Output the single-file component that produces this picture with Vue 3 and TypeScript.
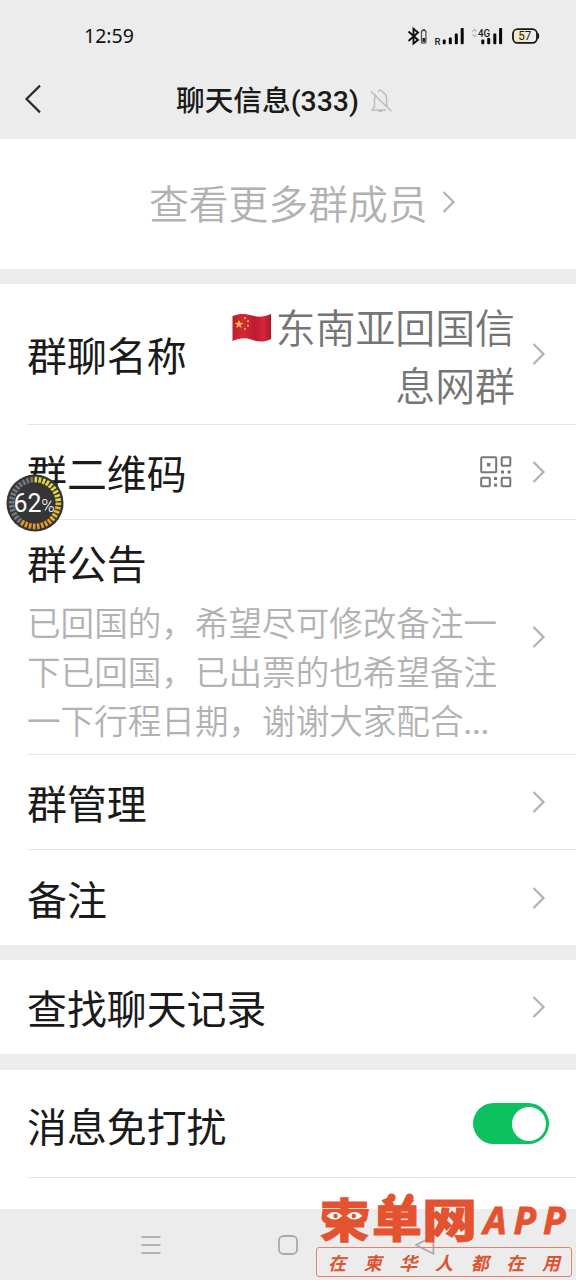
<script setup lang="ts">
interface Tick {
  angle: number
  color: string
}

const ticks: Tick[] = Array.from({ length: 36 }, (_, i) => ({
  angle: i * 10 + 2,
  color: i < 9 ? '#e6d83c' : i < 14 ? '#e3b92f' : i < 22 ? '#e59a24' : '#77777a',
}))

const management: string[] = ['群管理', '备注']
const slogan: string[] = ['在', '柬', '华', '人', '都', '在', '用']
</script>

<template>
  <div class="screen">
    <header class="top">
      <div class="status">
        <span class="clock">12:59</span>
        <svg class="status-icons" width="136" height="24" viewBox="0 0 136 24">
          <path d="M3.5 7.5 L13 16 L8.5 19.600 V4.700 L13 8.500 L3.500 17" fill="none" stroke="#111" stroke-width="1.9" />
          <rect x="16.5" y="6.5" width="4.400" height="12.600" rx="1" fill="none" stroke="#555" stroke-width="1.3" />
          <rect x="17.500" y="14" width="2.600" height="4" fill="#222" />
          <path d="M17.500 5.600h2.500" stroke="#444" stroke-width="1" />
          <text x="29.500" y="20.800" font-size="9.5" class="lab semi">R</text>
          <g fill="#080808">
            <rect x="37.7" y="15.5" width="3" height="4.7" rx="1" />
            <rect x="43.8" y="13.6" width="3" height="6.6" rx="1" />
            <rect x="49.8" y="9.4" width="3" height="10.8" rx="1" />
            <rect x="55.7" y="4" width="3" height="16.2" rx="1" />
            <rect x="76.3" y="15.5" width="3" height="4.7" rx="1" />
            <rect x="82.2" y="14" width="3" height="6.2" rx="1" />
            <rect x="88.3" y="9.4" width="3" height="10.8" rx="1" />
            <rect x="94.1" y="4" width="3" height="16.2" rx="1" />
          </g>
          <path d="M67.500 7.500l2-2.200 2 2.200M67.500 10.500l2 2.200 2-2.200" fill="none" stroke="#b5b5b5" stroke-width="1.2" />
          <text x="73" y="12.700" font-size="10.6" class="lab semi" textLength="12.3" lengthAdjust="spacingAndGlyphs">4G</text>
          <rect x="108" y="5.2" width="24" height="13.7" rx="4.6" fill="#ececec" stroke="#151515" stroke-width="1.8" />
          <path d="M112 6.300h9v11.500h-9q-3-.2-3-3.200v-5q0-3 3-3.300z" fill="#f3e8c5" />
          <path d="M133 9.400q1.700 2.600 0 5.200z" fill="#151515" stroke="#151515" />
          <text x="113.3" y="16.300" font-size="12" class="lab" textLength="13" lengthAdjust="spacingAndGlyphs">57</text>
        </svg>
      </div>
      <div class="titlebar">
        <svg class="back" width="20" height="32" viewBox="0 0 20 32">
          <path d="M17 2.600 L3.500 16 L17 29.400" fill="none" stroke="#2b2b2b" stroke-width="2.2" />
        </svg>
        <h1 class="title">聊天信息<span class="count">(333)</span></h1>
        <svg class="bell" width="24" height="26" viewBox="0 0 24 26">
          <path d="M2.300 22h14.500M3.500 22l2-3.800v-7.500q.1-3 1.500-4.200M9 4.200q.4-2 2.300-2t2.300 2q3.900 1.800 4 6.500v6.500l1 1.500M9.300 22.500q2 2.200 4 0M2 3.500l20.400 19.700" fill="none" stroke="#bdbdbd" stroke-width="1.5" />
        </svg>
      </div>
    </header>

    <section class="more">
      <span>查看更多群成员</span>
      <svg class="arrow" width="16" height="26" viewBox="0 0 16 26"><path d="M2.500 3 L12.500 13 L2.500 23" /></svg>
    </section>

    <section class="group">
      <div class="row name-row">
        <span class="label">群聊名称</span>
        <span class="group-name">
          <svg class="flag" width="40" height="34" viewBox="0 0 40 34">
            <defs>
              <linearGradient id="flagShade">
                <stop offset="0" stop-color="#bd1c2d" />
                <stop offset=".28" stop-color="#d32839" />
                <stop offset=".58" stop-color="#bd1b31" />
                <stop offset=".82" stop-color="#d5263c" />
                <stop offset="1" stop-color="#a91427" />
              </linearGradient>
            </defs>
            <path d="M.5 4 C8 1 14 1.500 20 3.500 S32 5 39 2 V27 C31 31 25 29.500 19 27.500 S8 26 .5 29Z" fill="url(#flagShade)" />
            <path d="M7 7.800l1.100 3 3.200.1-2.500 2 1 3.100L7 14.200 4.200 16l1-3.100-2.500-2 3.200-.1z" fill="#f7c53b" />
            <g fill="#ecae38"><circle cx="13" cy="6.2" r="1.1" /><circle cx="16" cy="9.2" r="1.1" /><circle cx="16" cy="13.7" r="1.1" /><circle cx="13" cy="17" r="1.1" /></g>
          </svg><span>东南亚回国信</span><br /><span>息网群</span>
        </span>
        <svg class="arrow" width="16" height="26" viewBox="0 0 16 26"><path d="M2.500 3 L12.500 13 L2.500 23" /></svg>
      </div>
      <div class="row qr-row">
        <span class="label">群二维码</span>
        <svg class="qr" width="32" height="32" viewBox="0 0 32 32">
          <g fill="none" stroke="#777" stroke-width="2">
            <rect x="1.2" y="1.2" width="15" height="15" rx="1" />
            <rect x="21.7" y="1.2" width="8.6" height="8.6" rx="1" />
            <rect x="1.2" y="21.7" width="8.6" height="8.6" rx="1" />
            <rect x="21.7" y="21.7" width="8.6" height="8.6" rx="1" />
          </g>
          <g fill="#777">
            <rect x="7" y="7" width="3.4" height="3.4" /><rect x="21" y="14.5" width="3" height="3" />
            <rect x="27.6" y="14.5" width="3" height="3" /><rect x="14" y="21" width="3" height="3" />
            <rect x="14" y="27.6" width="3" height="3" />
          </g>
        </svg>
        <svg class="arrow" width="16" height="26" viewBox="0 0 16 26"><path d="M2.500 3 L12.500 13 L2.500 23" /></svg>
      </div>
      <div class="row notice-row">
        <div class="notice">
          <span class="label">群公告</span>
          <p class="notice-text">已回国的，希望尽可修改备注一<br />下已回国，已出票的也希望备注<br />一下行程日期，谢谢大家配合<span class="dots">...</span></p>
        </div>
        <svg class="arrow" width="16" height="26" viewBox="0 0 16 26"><path d="M2.500 3 L12.500 13 L2.500 23" /></svg>
      </div>
      <div v-for="item in management" :key="item" class="row plain-row">
        <span class="label">{{ item }}</span>
        <svg class="arrow" width="16" height="26" viewBox="0 0 16 26"><path d="M2.500 3 L12.500 13 L2.500 23" /></svg>
      </div>
    </section>

    <section class="group">
      <div class="row search-row">
        <span class="label">查找聊天记录</span>
        <svg class="arrow" width="16" height="26" viewBox="0 0 16 26"><path d="M2.500 3 L12.500 13 L2.500 23" /></svg>
      </div>
    </section>

    <section class="group mute">
      <div class="row mute-row">
        <span class="label">消息免打扰</span>
        <span class="switch"><span class="knob"></span></span>
      </div>
    </section>

    <nav class="nav">
      <svg width="20" height="20" viewBox="0 0 20 20"><path d="M.5 2h19M.5 10h19M.5 18h19" stroke="#b3b3b3" stroke-width="1.8" /></svg>
      <svg width="20" height="20" viewBox="0 0 20 20"><rect x="1" y="1" width="18" height="18" rx="4.5" fill="none" stroke="#aaa" stroke-width="1.8" /></svg>
      <svg width="20" height="20" viewBox="0 0 20 20"><path d="M18.400 1.200v17.600L1 10z" fill="none" stroke="#aaa" stroke-width="1.8" stroke-linejoin="round" /></svg>
    </nav>

    <svg class="meter" width="58" height="58" viewBox="0 0 58 58">
      <circle cx="29" cy="29" r="28.5" fill="#353538" />
      <rect v-for="t in ticks" :key="t.angle" x="27.7" y="2.8" width="2.6" height="5.6" :fill="t.color" :transform="`rotate(${t.angle} 29 29)`" />
      <text x="7.600" y="37.800" font-size="26" textLength="28" lengthAdjust="spacingAndGlyphs">62</text>
      <text class="percent" x="35.3" y="38" font-size="18" textLength="13.5" lengthAdjust="spacingAndGlyphs">%</text>
    </svg>

    <div class="brand">
      <svg class="wordmark" width="260" height="52" viewBox="0 0 260 52">
        <g class="heavy">
          <text x="4" y="45.5" textLength="49" lengthAdjust="spacingAndGlyphs">柬</text>
          <text x="56" y="45.5" textLength="50" lengthAdjust="spacingAndGlyphs">单</text>
          <text x="106" y="45.5" textLength="55" lengthAdjust="spacingAndGlyphs">网</text>
        </g>
        <path d="M6.500 18 H53 L51 29 Q49 32 44 32 H11 Q6 32 5.500 27Z" fill="#e45230" />
        <path d="M10.500 25q8-8 16 0-8 7-16 0zM30.500 25q8-8 16 0-8 7-16 0z" fill="#fff" />
        <circle cx="19.5" cy="25" r="2.3" fill="#e45230" />
        <circle cx="37.8" cy="25" r="2.3" fill="#e45230" />
        <circle cx="75.5" cy="6.8" r="4.2" fill="#e45230" />
        <circle cx="93.5" cy="6.8" r="4.2" fill="#e45230" />
        <text class="app" x="167.5" y="43" textLength="82">APP</text>
      </svg>
      <div class="slogan"><span v-for="(c, i) in slogan" :key="i">{{ c }}</span></div>
    </div>
  </div>
</template>

<style>
body {
  background: #ececec;
}
</style>

<style scoped>
.screen {
  position: relative;
  width: 576px;
  height: 1280px;
  overflow: hidden;
  background: #ececec;
  color: #1a1a1a;
  font-family: "Noto Sans CJK SC", sans-serif;
  display: flex;
  flex-direction: column;
}
.top {
  height: 139px;
  flex: none;
}
.status {
  height: 71px;
  box-sizing: border-box;
  display: flex;
  align-items: center;
  justify-content: space-between;
  padding: 0 35px 0 84px;
}
.clock {
  font: 400 19.5px/24px "Noto Sans", sans-serif;
  color: #111;
}
.lab {
  font-family: Roboto, sans-serif;
  fill: #1a1a1a;
}
.semi {
  font-weight: 500;
}
.titlebar {
  height: 56px;
  display: flex;
  align-items: center;
  padding-left: 23px;
}
.title {
  margin: 2px 0 0 133px;
  font-size: 28.7px;
  font-weight: 500;
  line-height: 56px;
  white-space: nowrap;
}
.count {
  font-family: Roboto, sans-serif;
  font-size: 28.4px;
}
.bell {
  margin: 3px 0 0 10px;
}
.more {
  height: 130px;
  flex: none;
  background: #fff;
  display: flex;
  align-items: center;
  padding-left: 149px;
  font-size: 39.8px;
  font-weight: 350;
  color: #b2b2b2;
  box-sizing: border-box;
  padding-bottom: 5px;
}
.more .arrow {
  margin-left: 13px;
}
.arrow {
  flex: none;
}
.arrow path {
  fill: none;
  stroke: #b2b2b2;
  stroke-width: 2.2;
}
.group {
  margin-top: 15px;
  background: #fff;
  flex: none;
}
.row {
  display: flex;
  align-items: center;
  justify-content: space-between;
  box-sizing: border-box;
  margin-left: 27px;
  padding-right: 29px;
  border-bottom: 1px solid #e6e6e6;
}
.row:last-child {
  border-bottom: 0;
}
.label {
  font-size: 39.9px;
  line-height: 56px;
  font-weight: 400;
  white-space: nowrap;
}
.name-row {
  height: 141px;
}
.group-name {
  margin-left: auto;
  margin-right: 16px;
  padding-top: 1px;
  text-align: right;
  font-size: 39.9px;
  line-height: 58px;
  font-weight: 350;
  color: #757575;
  white-space: nowrap;
}
.flag {
  vertical-align: -3px;
  margin-right: 3.5px;
}
.qr-row {
  height: 95px;
}
.qr {
  margin-left: auto;
  margin-right: 19px;
}
.notice-row {
  height: 235px;
}
.notice {
  padding-top: 8px;
}
.notice .label {
  display: block;
}
.notice-text {
  margin: 7px 0 0;
  font-size: 33.6px;
  line-height: 49px;
  font-weight: 350;
  color: #b2b2b2;
  white-space: nowrap;
}
.dots {
  font-family: Roboto, sans-serif;
  font-size: 31px;
  font-weight: 500;
}
.plain-row {
  height: 95px;
}
.search-row {
  height: 94px;
}
.mute {
  margin-top: 16px;
  height: 139px;
}
.mute-row,
.mute-row:last-child {
  height: 108px;
  padding-right: 27px;
  border-bottom: 1px solid #e6e6e6;
}
.mute-row .label {
  padding-top: 2px;
}
.switch {
  width: 76px;
  height: 41px;
  border-radius: 21px;
  background: #0cc160;
  display: flex;
  align-items: center;
  justify-content: flex-end;
  padding-right: 3px;
  box-sizing: border-box;
}
.knob {
  width: 34px;
  height: 34px;
  border-radius: 50%;
  background: #fff;
}
.nav {
  height: 71px;
  display: flex;
  align-items: center;
  justify-content: center;
  gap: 117px;
}
.meter {
  position: absolute;
  left: 6px;
  top: 474px;
}
.meter text {
  font-family: Roboto, sans-serif;
  fill: #fff;
}
.meter .percent {
  font-weight: 300;
}
.brand {
  position: absolute;
  left: 316px;
  top: 1191px;
  width: 256px;
}
.wordmark {
  display: block;
  overflow: visible;
}
.heavy text {
  font-size: 46px;
  font-weight: 900;
  fill: #e45230;
  stroke: #e45230;
  stroke-width: 0.8px;
}
.app {
  font: italic 700 37px "Noto Sans", sans-serif;
  fill: #e45230;
  stroke: #e45230;
  stroke-width: 0.8px;
}
.slogan {
  margin-top: 4px;
  height: 30px;
  box-sizing: border-box;
  border: 1.5px solid #e4826c;
  border-radius: 3px;
  display: flex;
  align-items: center;
  justify-content: space-between;
  padding: 0 11px;
  font-size: 18px;
  line-height: 26px;
  font-weight: 600;
  font-style: italic;
  color: #dd5433;
}
</style>
